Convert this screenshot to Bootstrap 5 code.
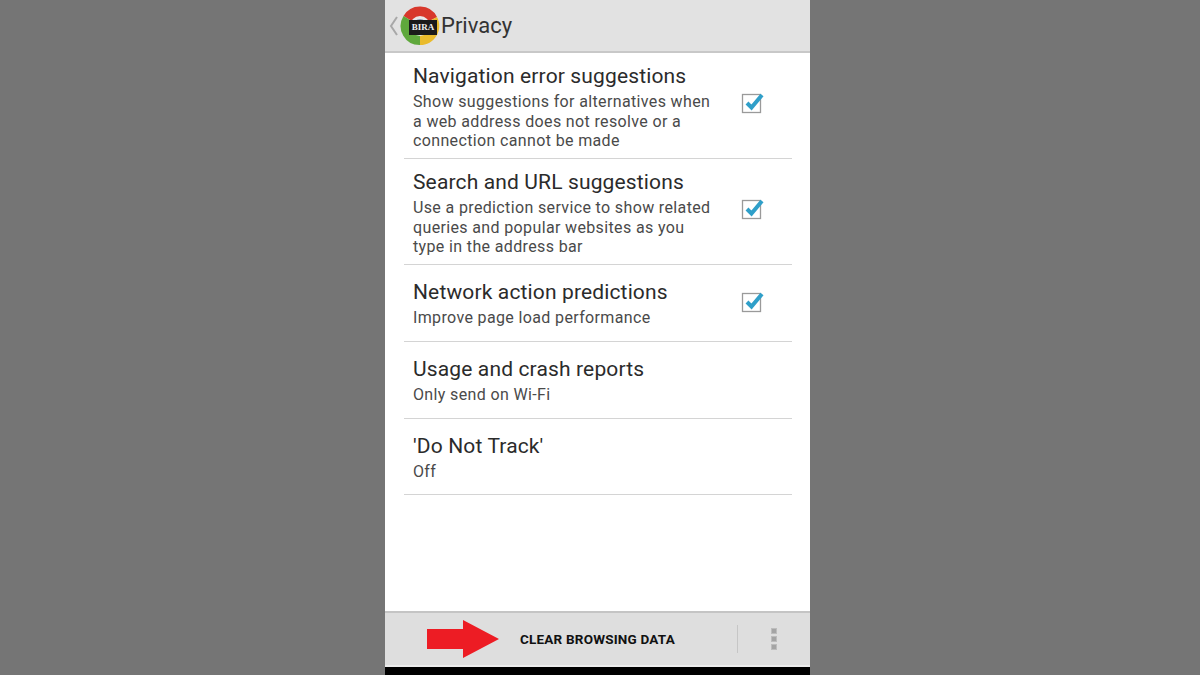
<!DOCTYPE html>
<html lang="en">
  <head>
    <meta charset="UTF-8" />
    <meta name="viewport" content="width=device-width, initial-scale=1.0" />
    <title>Privacy</title>
    <link
      href="https://cdn.jsdelivr.net/npm/bootstrap@5.3.2/dist/css/bootstrap.min.css"
      rel="stylesheet"
    />
    <style>
      html, body { height: 100%; }
      body { background: #757575; font-family: Roboto, "Liberation Sans", sans-serif; overflow: hidden; padding-right: 5px; }
      .phone { width: 425px; height: 675px; background: #fff; }
      .top-bar { height: 53px; background: #e2e2e2; border-bottom: 2px solid #c8c8c8; padding-left: 4px; }
      .back-arrow { width: 10px; height: 22px; }
      .app-logo { position: relative; width: 40px; height: 40px; margin-left: 1px; }
      .logo-tag { position: absolute; left: 9px; top: 14px; width: 28px; height: 15px; background: #1a1a1a; color: #eee; font: 700 9px/15px "Liberation Serif", serif; text-align: center; }
      .page-title { font-size: 22px; color: #333; margin-left: 1px; line-height: 1; }
      .pref-list { padding: 0 18px 0 19px; }
      .pref-row { border-bottom: 1px solid #d4d4d4; padding-left: 9px; }
      .pref-row.r3 { height: 106px; }
      .pref-row.r2 { height: 77px; }
      .pref-row.r2.last { height: 76px; }
      .pref-name { font-size: 21px; line-height: 26px; color: #2b2b2b; padding-top: 10px; letter-spacing: .14px; }
      .r2 .pref-name { padding-top: 14px; }
      .pref-desc { font-size: 16px; line-height: 19.5px; color: #4a4a4a; letter-spacing: .36px; margin-top: 3px; }
      .pref-check { width: 24px; height: 24px; flex: none; margin-right: 27px; margin-top: 38px; }
      .r2 .pref-check { margin-top: 25px; }
      .bottom-bar { height: 56px; background: #dedede; border-top: 2px solid #c4c4c4; border-bottom: 2px solid #ececec; }
      .arrow-icon { width: 74px; height: 40px; margin-left: 42px; }
      .clear-label { font-size: 13.5px; font-weight: 700; color: #111; margin-left: 19px; letter-spacing: .2px; width: 217px; }
      .bar-sep { width: 1px; height: 28px; background: #c6c6c6; }
      .menu-dots { gap: 2px; margin-left: 33px; }
      .menu-dots span { width: 6px; height: 6px; background: #a4a4a4; border: 1px solid #bcbcbc; display: block; }
      .black-strip { background: #000; height: 8px; }
    </style>
  </head>
  <body class="d-flex justify-content-center">
    <div class="phone d-flex flex-column">
      <!-- Header -->
      <div class="top-bar d-flex align-items-center flex-shrink-0">
        <svg class="back-arrow" viewBox="0 0 10 22"><path d="M8 2 L2 11 L8 20" fill="none" stroke="#a8a8a8" stroke-width="2"/></svg>
        <div class="app-logo">
          <svg width="40" height="40" viewBox="0 0 40 40">
            <path d="M20 20 L3.5 10 A19 19 0 0 1 37 11 Z" fill="#d8382c"/>
            <path d="M20 20 L37 11 A19 19 0 0 1 20 39 Z" fill="#e9bb2c"/>
            <path d="M20 20 L20 39 A19 19 0 0 1 3.5 10 Z" fill="#5fa83c"/>
            <circle cx="20" cy="20" r="10" fill="#e8e8e8"/>
            <circle cx="20" cy="20" r="7" fill="#8a9fb8"/>
          </svg>
          <div class="logo-tag">BIRA</div>
        </div>
        <div class="page-title">Privacy</div>
      </div>

      <!-- Content -->
      <div class="pref-list flex-grow-1">
        <div class="pref-row r3 d-flex justify-content-between">
          <div>
            <div class="pref-name">Navigation error suggestions</div>
            <div class="pref-desc">Show suggestions for alternatives when<br />a web address does not resolve or a<br />connection cannot be made</div>
          </div>
          <svg class="pref-check" viewBox="0 0 24 24"><rect x="1.5" y="3.5" width="18" height="18" fill="#fff" stroke="#9a9a9a" stroke-width="1.3"/><path d="M6 12 L10.5 16.5 L21 4" fill="none" stroke="#2f9fc9" stroke-width="4"/></svg>
        </div>
        <div class="pref-row r3 d-flex justify-content-between">
          <div>
            <div class="pref-name">Search and URL suggestions</div>
            <div class="pref-desc">Use a prediction service to show related<br />queries and popular websites as you<br />type in the address bar</div>
          </div>
          <svg class="pref-check" viewBox="0 0 24 24"><rect x="1.5" y="3.5" width="18" height="18" fill="#fff" stroke="#9a9a9a" stroke-width="1.3"/><path d="M6 12 L10.5 16.5 L21 4" fill="none" stroke="#2f9fc9" stroke-width="4"/></svg>
        </div>
        <div class="pref-row r2 d-flex justify-content-between">
          <div>
            <div class="pref-name">Network action predictions</div>
            <div class="pref-desc">Improve page load performance</div>
          </div>
          <svg class="pref-check" viewBox="0 0 24 24"><rect x="1.5" y="3.5" width="18" height="18" fill="#fff" stroke="#9a9a9a" stroke-width="1.3"/><path d="M6 12 L10.5 16.5 L21 4" fill="none" stroke="#2f9fc9" stroke-width="4"/></svg>
        </div>
        <div class="pref-row r2">
          <div class="pref-name">Usage and crash reports</div>
          <div class="pref-desc">Only send on Wi-Fi</div>
        </div>
        <div class="pref-row r2 last">
          <div class="pref-name">'Do Not Track'</div>
          <div class="pref-desc">Off</div>
        </div>
      </div>

      <!-- Bottom bar -->
      <div class="bottom-bar d-flex align-items-center flex-shrink-0">
        <svg class="arrow-icon" viewBox="0 0 74 40"><path d="M0 10 H36 V1 L72 20 L36 39 V30 H0 Z" fill="#ed1c24"/></svg>
        <div class="clear-label">CLEAR BROWSING DATA</div>
        <div class="bar-sep"></div>
        <div class="menu-dots d-flex flex-column"><span></span><span></span><span></span></div>
      </div>
      <div class="black-strip"></div>
    </div>

    <script src="https://cdn.jsdelivr.net/npm/bootstrap@5.3.2/dist/js/bootstrap.bundle.min.js"></script>
  </body>
</html>
